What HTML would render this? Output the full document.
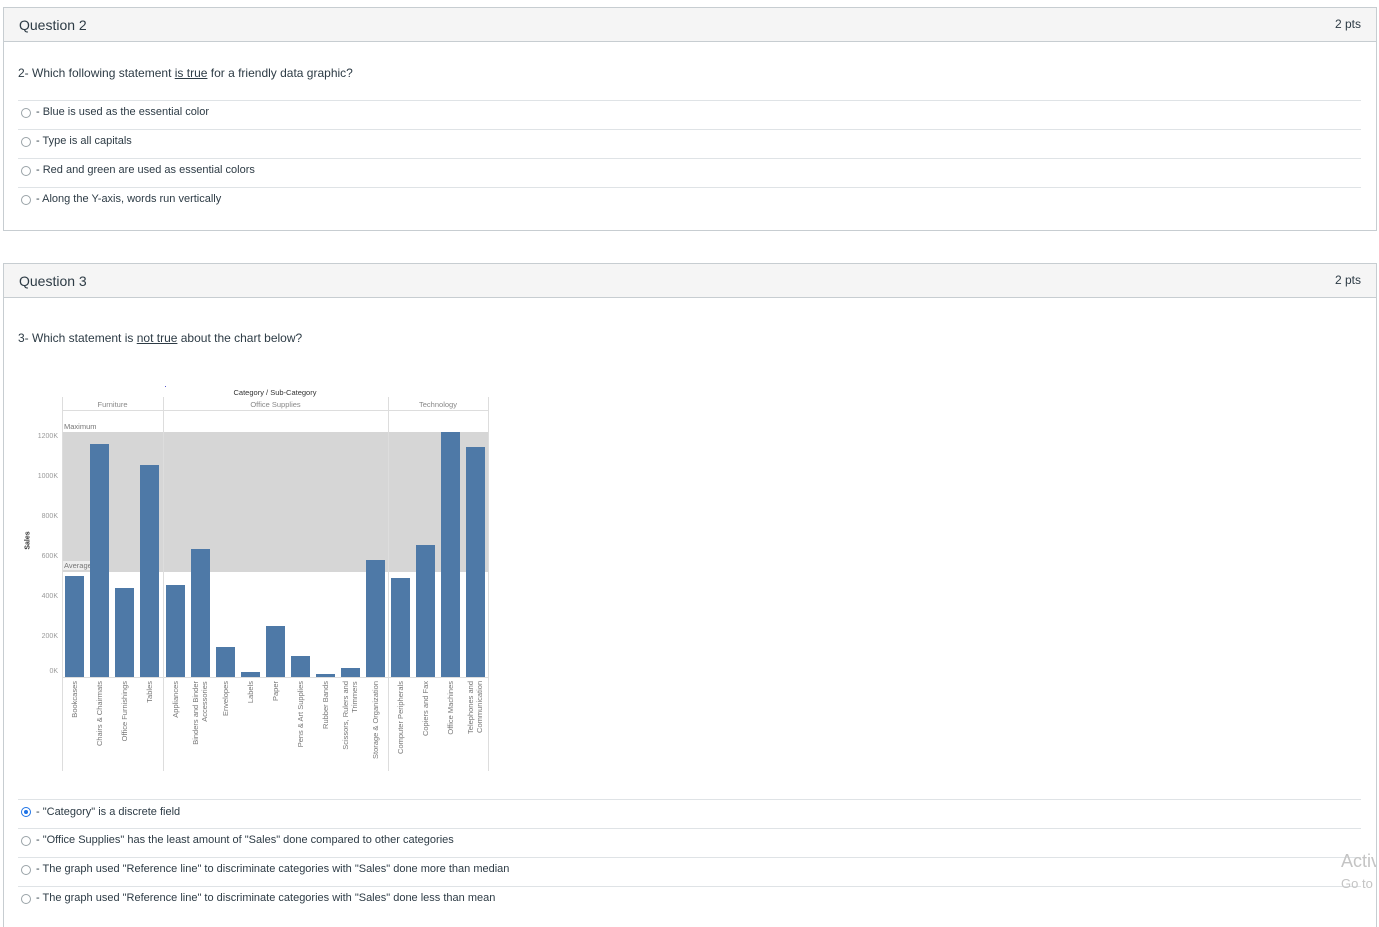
<!DOCTYPE html>
<html><head><meta charset="utf-8"><style>
*{margin:0;padding:0;box-sizing:border-box}
html,body{width:1379px;height:927px;overflow:hidden}
body{background:#fff;font-family:"Liberation Sans",sans-serif;color:#2d3b45;position:relative}
.a{position:absolute}
.box{position:absolute;left:3px;width:1374px;border:1px solid #c7cdd1}
.hd{position:absolute;left:0;right:0;top:0;height:34px;background:#f5f5f5;border-bottom:1px solid #c7cdd1}
.hd b{position:absolute;left:15px;top:9px;font-weight:normal;font-size:14px;color:#2d3b45}
.hd i{position:absolute;right:15px;top:9px;font-style:normal;font-size:12px}
.t{font-size:12px;color:#2d3b45;white-space:nowrap}
.o{position:absolute;left:36px;font-size:11px;color:#2d3b45;white-space:nowrap}
.sep{position:absolute;left:18px;width:1343px;height:1px;background:#dfe3e6}
.r{position:absolute;left:21px;width:10px;height:10px;border:1px solid #9aa3a8;border-radius:50%;background:#fff}
.r.on{border-color:#1e73e6}
.r.on:after{content:"";position:absolute;left:2px;top:2px;width:4px;height:4px;border-radius:50%;background:#1e73e6}
.bar{position:absolute;width:19px;background:#4e79a7}
.lab{position:absolute;top:681px;writing-mode:vertical-rl;transform:rotate(180deg);font-size:7.5px;color:#777;white-space:nowrap;line-height:9px;text-align:right}
.yl{position:absolute;left:20px;width:38px;text-align:right;font-size:7px;color:#999}
</style></head><body>

<div class="box" style="top:7px;height:224px">
 <div class="hd"><b>Question 2</b><i>2 pts</i></div>
</div>
<div class="a t" style="left:18px;top:66px">2- Which following statement <u>is true</u> for a friendly data graphic?</div>
<div class="sep" style="top:100px"></div>
<div class="sep" style="top:129px"></div>
<div class="sep" style="top:158px"></div>
<div class="sep" style="top:187px"></div>
<div class="r" style="top:108px"></div><div class="o" style="top:106px">- Blue is used as the essential color</div>
<div class="r" style="top:137px"></div><div class="o" style="top:135px">- Type is all capitals</div>
<div class="r" style="top:166px"></div><div class="o" style="top:164px">- Red and green are used as essential colors</div>
<div class="r" style="top:195px"></div><div class="o" style="top:193px">- Along the Y-axis, words run vertically</div>

<div class="box" style="top:263px;height:700px">
 <div class="hd"><b>Question 3</b><i>2 pts</i></div>
</div>
<div class="a t" style="left:18px;top:331px">3- Which statement is <u>not true</u> about the chart below?</div>

<div class="a" style="left:62px;top:432px;width:426px;height:140px;background:#d6d6d6"></div>
<div class="a" style="left:62px;top:397px;width:1px;height:374px;background:#ddd"></div>
<div class="a" style="left:163px;top:397px;width:1px;height:374px;background:#ddd"></div>
<div class="a" style="left:388px;top:397px;width:1px;height:374px;background:#ddd"></div>
<div class="a" style="left:488px;top:397px;width:1px;height:374px;background:#ddd"></div>
<div class="a" style="left:62px;top:410px;width:426px;height:1px;background:#ddd"></div>
<div class="a" style="left:62px;top:677px;width:426px;height:1px;background:#ddd"></div>
<div class="a" style="left:165px;top:386px;width:1px;height:1px;background:#55c"></div>
<div class="a" style="left:200px;top:388px;width:150px;text-align:center;font-size:7.5px;color:#333">Category / Sub-Category</div>
<div class="a" style="left:62px;top:400px;width:101px;text-align:center;font-size:7.5px;color:#888">Furniture</div>
<div class="a" style="left:163px;top:400px;width:225px;text-align:center;font-size:7.5px;color:#888">Office Supplies</div>
<div class="a" style="left:388px;top:400px;width:100px;text-align:center;font-size:7.5px;color:#888">Technology</div>
<div class="a" style="left:64px;top:422px;font-size:7.5px;color:#777">Maximum</div>
<div class="a" style="left:63px;top:561px;font-size:7.5px;color:#777;background:#eee;padding:0 1px">Average</div>
<div class="a" style="left:19px;top:537px;font-size:7px;color:#333;transform:rotate(-90deg);font-weight:bold">Sales</div>
<div class="yl" style="top:433px">1200K</div>
<div class="yl" style="top:473px">1000K</div>
<div class="yl" style="top:513px">800K</div>
<div class="yl" style="top:553px">600K</div>
<div class="yl" style="top:593px">400K</div>
<div class="yl" style="top:633px">200K</div>
<div class="yl" style="top:668px">0K</div>

<div class="bar" style="left:65px;top:576px;height:101px"></div>
<div class="bar" style="left:90px;top:444px;height:233px"></div>
<div class="bar" style="left:115px;top:588px;height:89px"></div>
<div class="bar" style="left:140px;top:465px;height:212px"></div>
<div class="bar" style="left:166px;top:585px;height:92px"></div>
<div class="bar" style="left:191px;top:549px;height:128px"></div>
<div class="bar" style="left:216px;top:647px;height:30px"></div>
<div class="bar" style="left:241px;top:672px;height:5px"></div>
<div class="bar" style="left:266px;top:626px;height:51px"></div>
<div class="bar" style="left:291px;top:656px;height:21px"></div>
<div class="bar" style="left:316px;top:674px;height:3px"></div>
<div class="bar" style="left:341px;top:668px;height:9px"></div>
<div class="bar" style="left:366px;top:560px;height:117px"></div>
<div class="bar" style="left:391px;top:578px;height:99px"></div>
<div class="bar" style="left:416px;top:545px;height:132px"></div>
<div class="bar" style="left:441px;top:432px;height:245px"></div>
<div class="bar" style="left:466px;top:447px;height:230px"></div>

<div class="lab" style="left:70px">Bookcases</div>
<div class="lab" style="left:95px">Chairs &amp; Chairmats</div>
<div class="lab" style="left:120px">Office Furnishings</div>
<div class="lab" style="left:145px">Tables</div>
<div class="lab" style="left:171px">Appliances</div>
<div class="lab" style="left:191px">Binders and Binder<br>Accessories</div>
<div class="lab" style="left:221px">Envelopes</div>
<div class="lab" style="left:246px">Labels</div>
<div class="lab" style="left:271px">Paper</div>
<div class="lab" style="left:296px">Pens &amp; Art Supplies</div>
<div class="lab" style="left:321px">Rubber Bands</div>
<div class="lab" style="left:341px">Scissors, Rulers and<br>Trimmers</div>
<div class="lab" style="left:371px">Storage &amp; Organization</div>
<div class="lab" style="left:396px">Computer Peripherals</div>
<div class="lab" style="left:421px">Copiers and Fax</div>
<div class="lab" style="left:446px">Office Machines</div>
<div class="lab" style="left:466px">Telephones and<br>Communication</div>

<div class="sep" style="top:799px"></div>
<div class="sep" style="top:828px"></div>
<div class="sep" style="top:857px"></div>
<div class="sep" style="top:886px"></div>
<div class="r on" style="top:807px"></div><div class="o" style="top:806px">- "Category" is a discrete field</div>
<div class="r" style="top:836px"></div><div class="o" style="top:834px">- "Office Supplies" has the least amount of "Sales" done compared to other categories</div>
<div class="r" style="top:865px"></div><div class="o" style="top:863px">- The graph used "Reference line" to discriminate categories with "Sales" done more than median</div>
<div class="r" style="top:894px"></div><div class="o" style="top:892px">- The graph used "Reference line" to discriminate categories with "Sales" done less than mean</div>

<div class="a" style="left:1341px;top:851px;font-size:18px;color:#c4c4c4;white-space:nowrap;width:35px;overflow:hidden">Activate</div>
<div class="a" style="left:1341px;top:876px;font-size:13px;color:#c4c4c4;white-space:nowrap;width:35px;overflow:hidden">Go to</div>
</body></html>
